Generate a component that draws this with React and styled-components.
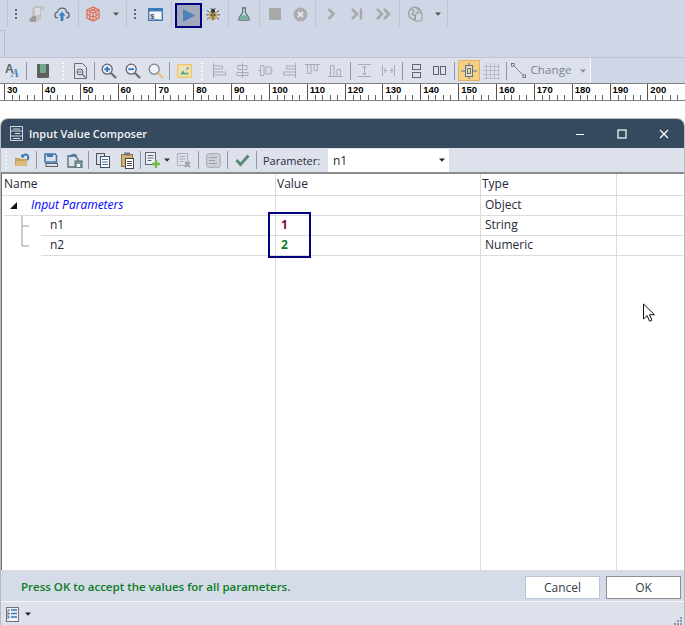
import React from 'react';
import styled, { createGlobalStyle } from 'styled-components';

const Global = createGlobalStyle`
  html, body { margin: 0; padding: 0; background: #fff; }
  body { font-family: "Open Sans", "Noto Sans", sans-serif; font-size: 12px; color: #1f2a3a; }
  #root { width: 685px; height: 625px; overflow: hidden; }
`;

const Page = styled.div`
  width: 685px; height: 625px; display: flex; flex-direction: column; background: #fff; position: relative;
`;
const TopArea = styled.div`
  background: #cfd6e5; height: 83px; display: flex; flex-direction: column; flex: none;
`;
const MainBar = styled.div`
  height: 28px; display: flex; align-items: center; padding-left: 7px; flex: none;
`;
const TabStrip = styled.div`
  height: 30px; flex: none; border-bottom: 1px solid #bcc4d5; box-sizing: border-box; padding-top: 2px;
`;
const TabEdge = styled.div`
  width: 5px; height: 27px; border-top: 1px solid #b4bccd; border-right: 1px solid #b4bccd; box-sizing: border-box;
`;
const SecondBar = styled.div`
  height: 25px; width: 591px; display: flex; align-items: center; background: #dce1ec;
  border-right: 1px solid #f4f6fa; box-sizing: border-box; flex: none;
`;
const Slot = styled.div`
  width: ${p => p.$w}px; height: 22px; flex: none; display: flex; align-items: center; justify-content: center;
`;
const Sep = styled.div`
  width: 1px; height: ${p => p.$h || 18}px; flex: none; background: ${p => p.$c || '#8f98a8'};
  margin-left: ${p => p.$l ?? 2}px; margin-right: ${p => p.$r ?? 2}px;
`;
const TallSep = styled(Sep)`
  height: 26px; background: #bdc5d3;
`;
const GripDots = styled.div`
  width: 2px; height: ${p => p.$h}px;
  background: repeating-linear-gradient(to bottom, ${p => p.$c} 0 2px, transparent 2px ${p => p.$s}px);
`;
const PlayButton = styled.div`
  width: 27px; height: 25px; margin-top: 3px; flex: none; box-sizing: border-box; border: 2px solid #000080;
  background: #a1a9bb; display: flex; align-items: center; justify-content: center;
`;
const ActiveTool = styled.div`
  width: 22px; height: 21px; flex: none; box-sizing: border-box; border: 1px solid #e2b35f; background: #f5cf84;
  display: flex; align-items: center; justify-content: center;
`;
const ChangeLabel = styled.span`
  width: 46px; flex: none; font-size: 11.5px; color: #7d8494; line-height: 1; letter-spacing: .1px; padding-bottom: 2px;
`;
const Ruler = styled.div`
  height: 18px; flex: none; display: flex; box-sizing: border-box; border-top: 1px solid #7f7f7f; border-bottom: 1px solid #7f7f7f;
  background: #fff; padding-left: 4px; overflow: hidden;
`;
const RulerCell = styled.div`
  width: 37.85px; flex: none; box-sizing: border-box; border-left: 1px solid #555; position: relative; height: 16px;
  background: repeating-linear-gradient(to right, transparent 0 6.57px, #666 6.57px 7.57px) 0 100% / 100% 5px no-repeat;
  font: bold 9.5px/12px "Liberation Sans", Arial, sans-serif; color: #000; padding-left: 2px;
`;
const Gap = styled.div` height: 18px; flex: none; `;
const Dialog = styled.div`
  width: 683px; height: 507px; margin-left: 1px; flex: none; display: flex; flex-direction: column; position: relative;
  box-sizing: border-box; border-radius: 7px 7px 0 0; background: #dce1ec; box-shadow: 0 0 0 1px #b9b9b9; overflow: hidden;
`;
const TitleBar = styled.div`
  height: 29px; flex: none; background: #354a5f; display: flex; align-items: center; color: #fff; padding-left: 9px;
`;
const TitleText = styled.div`
  font-size: 11px; font-weight: 600; margin-left: 6px; flex: 1; color: #f2f4f7; padding-bottom: 1px;
`;
const WinButtons = styled.div`
  display: flex; margin-right: -1px; flex: none;
`;
const WinButton = styled.div`
  width: 42px; height: 29px; display: flex; align-items: center; justify-content: center; flex: none;
`;
const DialogTools = styled.div`
  height: 24px; flex: none; display: flex; align-items: center; background: #dce1ec;
`;
const ParamLabel = styled.span`
  font-size: 11px; color: #2a2a3a; width: 71px; flex: none; padding-left: 6px; box-sizing: border-box;
`;
const Combo = styled.div`
  width: 121px; height: 23px; flex: none; background: #fff; display: flex; align-items: center; justify-content: space-between;
  padding: 0 4px 0 5px; box-sizing: border-box; font-size: 12px; color: #1f2a3a;
`;
const GridArea = styled.div`
  height: 398px; flex: none; display: flex; background: #fff; border-top: 2px solid #8b8b8b; border-left: 1px solid #6f6f6f;
  box-sizing: border-box; position: relative;
`;
const Column = styled.div`
  width: ${p => p.$w}px; flex: ${p => (p.$w ? 'none' : 1)}; border-right: 1px solid ${p => (p.$last ? 'transparent' : '#dcdcdc')}; box-sizing: border-box;
`;
const HeadCell = styled.div`
  height: 22px; box-sizing: border-box; border-bottom: 1px solid #dcdcdc; padding: 0 0 0 ${p => p.$pad ?? 1}px; font-size: 12px; line-height: 20px; color: #22283a;
`;
const Cell = styled.div`
  height: 20px; box-sizing: border-box; border-bottom: 1px solid #dcdcdc; padding: 0 0 1px ${p => p.$pad ?? 5}px; font-size: 12px; line-height: 18px; color: #1f2a3a;
  margin-left: ${p => p.$ml ?? 0}px; display: flex; align-items: center; flex: ${p => (p.$grow ? 1 : 'none')};
`;
const GroupName = styled.span`
  color: #0000ff; font-style: italic;
`;
const Expander = styled.span`
  width: 0; height: 0; border-style: solid; border-width: 0 0 7px 7px; border-color: transparent transparent #111 transparent; margin: 0 14px 0 6px;
`;
const NumValue = styled.span`
  font-weight: 700; color: ${p => p.$c};
`;
const TreeRow = styled.div`
  display: flex; height: 20px;
`;
const TreeGuide = styled.div`
  width: 39px; flex: none;
`;
const Highlight = styled.div`
  position: absolute; left: 266px; top: 38px; width: 43px; height: 46px; box-sizing: border-box; border: 2px solid #000080; pointer-events: none;
`;
const StatusArea = styled.div`
  height: 32px; flex: none; background: #d5dbe8; display: flex; align-items: center; justify-content: space-between;
  border-bottom: 1px solid #f6f7fa; border-top: 1px solid #d9dce2; box-sizing: border-box; padding: 0 3px 0 20px;
`;
const StatusText = styled.span`
  font-size: 11.5px; font-weight: 600; color: #0b7d22;
`;
const Buttons = styled.div`
  display: flex; gap: 6px; align-self: flex-end; margin-bottom: 2px;
`;
const Btn = styled.button`
  width: 75px; height: 23px; box-sizing: border-box; background: #fff; font: 12px "Open Sans", sans-serif; color: #333b48; padding: 0;
  border: ${p => (p.$primary ? '1px solid #8e8e8e' : '1px solid #bcc6d3')};
`;
const BottomBar = styled.div`
  flex: 1; display: flex; align-items: center; padding-left: 3px; justify-content: flex-start; position: relative;
`;
const ResizeGrip = styled.div`
  position: absolute; right: 1px; bottom: 2px; width: 10px; height: 10px;
`;
const Cursor = styled.svg`
  position: absolute; left: 642px; top: 303px;
`;

const I = ({ s = 16, w, r, children }) => {
  const vw = w || s;
  return (
    <svg width={r || vw} height={r ? (r * s) / vw : s} viewBox={`0 0 ${vw} ${s}`} fill="none">
      {children}
    </svg>
  );
};
const Down = ({ c = '#555' }) => <I s={4} w={6}><path d="M0 .5h6L3 3.8z" fill={c} /></I>;

const Deploy = () => <I s={18}><path d="M6 1h7c2 0 3 1 3 2.5V5h-3v9l-5 3H3c-2 0-2.5-1.5-2-2.5L4 12V4z" fill="#c2c2c2" /><path d="M1 14.5L5 11h3v6H3z" fill="#9c9c9c" /><path d="M7 3h5v7H7z" fill="#d9dbe0" /></I>;
const Cloud = () => <I s={18} r={16}><path d="M4.5 13.5C2 13.5 1 11.8 1 10.2 1 8.4 2.3 7.4 3.6 7.3 4 4.8 6.4 2.5 9.2 2.5c2.7 0 4.6 1.9 5 4.3 1.6.2 2.8 1.6 2.8 3.3 0 1.9-1.3 3.4-3.4 3.4" stroke="#5c6470" strokeWidth="1.4" /><path d="M9 6.5l4 4.2h-2.4V17H7.4v-6.3H5z" fill="#3b7ec0" /></I>;
const CubeIcon = () => <I s={16}><g stroke="#e46f52" strokeWidth="1.3"><path d="M2 4l6-3 6 3v8l-6 3-6-3z" /><path d="M2 4l6 3 6-3M8 7v8M5 2.5l6 3v8M11 2.5l-6 3v8M2 8l6 3 6-3" /></g></I>;
const ConsoleIcon = () => <I s={13} w={15}><rect x=".7" y=".7" width="13.6" height="11.6" stroke="#3c79b5" strokeWidth="1.4" fill="#f4f6fa" /><rect x="1" y="1" width="13" height="2.4" fill="#3c79b5" /><text x="2" y="10.5" fontSize="7.5" fontWeight="700" fill="#3c4a60" fontFamily="Liberation Mono, monospace">$_</text></I>;
const Play = () => <I s={13} w={12}><path d="M0 0l12 6.5L0 13z" fill="#4b82bc" /></I>;
const Bug = () => <I s={16} r={14}><g stroke="#444" strokeWidth="1"><path d="M1 4l3 2M15 4l-3 2M0 9h3M16 9h-3M1 14l3-2M15 14l-3-2M5 1l2 2M11 1L9 3" /></g><ellipse cx="8" cy="9.5" rx="4.7" ry="5.5" fill="#c9a95c" /><path d="M8 4v11" stroke="#444" /><circle cx="8" cy="4.5" r="2.4" fill="#3b3b3b" /><circle cx="6" cy="9" r="1" fill="#444" /><circle cx="10" cy="9" r="1" fill="#444" /></I>;
const Flask = () => <I s={16} r={14}><path d="M5.5 1h5M6.5 1v5L2 13.2c-.5 1 0 1.8 1 1.8h10c1 0 1.5-.8 1-1.8L9.5 6V1" stroke="#5f6d72" strokeWidth="1.3" /><path d="M5 9.5h6l2 4.2H3z" fill="#69b5a0" /></I>;
const Stop = () => <I s={12}><rect width="12" height="12" fill="#a9a9a9" /></I>;
const XCircle = () => <I s={15}><circle cx="7.5" cy="7.5" r="7" fill="#adadad" /><path d="M5 5l5 5M10 5l-5 5" stroke="#e6e8ee" strokeWidth="2" /></I>;
const Chev = () => <I s={12} w={9}><path d="M1.5 1l5 5-5 5" stroke="#a8a8a8" strokeWidth="2.6" /></I>;
const ChevBar = () => <I s={12}><path d="M1 1l5 5-5 5" stroke="#a8a8a8" strokeWidth="2.6" /><path d="M10 .5v11" stroke="#a8a8a8" strokeWidth="2.4" /></I>;
const ChevDouble = () => <I s={12} w={15}><path d="M1 1l5 5-5 5M8 1l5 5-5 5" stroke="#a8a8a8" strokeWidth="2.6" /></I>;
const Globe = () => <I s={16}><circle cx="7" cy="7.5" r="6.3" stroke="#a3a3a3" strokeWidth="1.5" /><path d="M3 3l3 2-2 3 3 2v3M8 2l3 2-2 2" stroke="#a3a3a3" strokeWidth="1.5" /><path d="M8 7h6v6l-1 2H7z" fill="#cfd6e5" stroke="#9a9a9a" /></I>;

const AaIcon = () => <I s={19} w={24}><text x="5" y="12" fontSize="12" fontWeight="700" fill="#5c6470" fontFamily="Liberation Sans, sans-serif">A</text><text x="11" y="16" fontSize="12" fontWeight="700" fontStyle="italic" fill="#4a82bf" fontFamily="Liberation Serif, serif">A</text></I>;
const BookIcon = () => <I s={14} w={12}><rect width="12" height="14" rx="1" fill="#5e5e5e" /><rect x="3" y="0" width="6" height="9" fill="#6fa88c" /></I>;
const DocZoom = () => <I s={16} w={13}><path d="M.5 .5h8l4 4v11H.5z" stroke="#6a7078" strokeWidth="1" /><circle cx="6" cy="9" r="3" stroke="#555" /><path d="M4.5 9h3" stroke="#555" /><path d="M8.5 11.5l3 3" stroke="#6a7078" strokeWidth="1.4" /></I>;
const Zoom = ({ sign, handle = '#6a6a6a', ring = '#5b6470' }) => <I s={16}><circle cx="6.2" cy="6.2" r="5" stroke={ring} strokeWidth="1.3" fill="#eef1f6" />{sign && <path d={sign === '+' ? 'M3.4 6.2h5.6M6.2 3.4v5.6' : 'M3.4 6.2h5.6'} stroke="#3777b8" strokeWidth="1.9" />}<path d="M10 10l5 5" stroke={handle} strokeWidth="2.2" /></I>;
const Picture = () => <I s={14} w={15}><rect x=".7" y=".7" width="13.6" height="12.6" stroke="#efc76f" strokeWidth="1.4" fill="#f0e3b3" /><path d="M3 10.5l3-4 2.5 3 1.5-1.5 2 2.5z" fill="#5ea587" /><circle cx="10.5" cy="4.5" r="1.2" fill="#6f9fd0" /></I>;
const G = '#a6adb9';
const AlignIcon = ({ d }) => <I s={15}><path d={d} stroke={G} strokeWidth="1" /></I>;
const StackIcon = () => <I s={14} w={9}><rect x=".5" y=".5" width="8" height="5" stroke="#5f6670" /><rect x=".5" y="8.5" width="8" height="5" stroke="#5f6670" /></I>;
const PairIcon = () => <I s={9} w={13}><rect x=".5" y=".5" width="5" height="8" stroke="#5f6670" /><rect x="7.5" y=".5" width="5" height="8" stroke="#5f6670" /></I>;
const Snap = () => <I s={16}><rect x="4.5" y="2.5" width="7" height="11" stroke="#6a7078" fill="#e8dcc0" /><rect x="6.5" y="5.5" width="3" height="5" stroke="#6a7078" /><path d="M0 8h4.5M11.5 8H16M8 0v2.5M8 13.5V16" stroke="#4d7aa8" /></I>;
const GridIco = () => <I s={16} w={17}><path d="M0 3.5h17M0 7.5h17M0 11.5h17M0 15.5h17M3.5 0v16M7.5 0v16M11.5 0v16M15.5 0v16" stroke="#b6bcc8" /></I>;
const LineIco = () => <I s={15}><path d="M2 2l11 11" stroke="#6b7280" strokeWidth=".8" /><rect x=".5" y=".5" width="2.5" height="2.5" stroke="#6b7280" fill="#fff" /><rect x="12" y="12" width="2.5" height="2.5" stroke="#6b7280" fill="#fff" /></I>;

const AppWinIcon = () => <I s={15} w={13}><path d="M.5 .5h12v14H.5zM.5 5h12M.5 10h12M3 3h7M5 7.5h5M3 12.5h7" stroke="#d4dae2" /></I>;
const MinIcon = () => <I s={10}><path d="M1 5.5h8" stroke="#fff" strokeWidth="1.2" /></I>;
const MaxIcon = () => <I s={10}><rect x="1" y="1" width="8" height="8" stroke="#fff" strokeWidth="1.2" /></I>;
const CloseIcon = () => <I s={10}><path d="M1 1l8 8M9 1L1 9" stroke="#fff" strokeWidth="1.2" /></I>;

const Open = () => <I s={14} w={16}><path d="M1 5h5l1 1h6v7H1z" fill="#c9a35e" /><path d="M1 13l2-5h11l-2 5z" fill="#dcbb7b" /><path d="M8 4c1-3 5-3.5 6-1 .6 1.5 0 3-.5 4" stroke="#3d78b5" strokeWidth="2" /><path d="M6.5 1.5l2 4 2.5-3z" fill="#3d78b5" /></I>;
const Save = () => <I s={14}><path d="M1 1h10l1.5 1.5V9H1z" stroke="#3f78b2" strokeWidth="1.6" /><rect x="3" y="1" width="6" height="3" fill="#3f78b2" /><rect x="2" y="10.5" width="11.5" height="3" stroke="#5e5e5e" /></I>;
const SaveAll = () => <I s={15} w={16}><path d="M1 3h7l3 3v8H1z" stroke="#5e6670" strokeWidth="1.3" /><path d="M3 4c2-3 5-3 7-1" stroke="#3f78b2" strokeWidth="1.6" /><rect x="8" y="8" width="7" height="7" fill="#6f9f92" stroke="#5e6670" /><rect x="10" y="11" width="3" height="3" fill="#fff" /></I>;
const CopyIcon = () => <I s={15} w={14}><rect x=".5" y=".5" width="8" height="11" stroke="#4d5560" fill="#dce1ec" /><rect x="4.5" y="3.5" width="9" height="11" stroke="#44505e" fill="#fff" /><path d="M6 6.5h6M6 9h6M6 11.5h6" stroke="#3f78b2" /></I>;
const PasteIcon = () => <I s={17} w={13}><rect x=".5" y="2.5" width="11" height="12" fill="#d5b36e" stroke="#8a7447" /><rect x="3" y=".5" width="6" height="3" fill="#777" /><rect x="4.5" y="6.5" width="8" height="10" fill="#fff" stroke="#444" /><path d="M6 9.5h5M6 11.5h5M6 13.5h5" stroke="#555" /></I>;
const AddRow = () => <I s={16}><rect x=".5" y=".5" width="10" height="12" stroke="#5a6470" fill="#eef1f6" /><path d="M2.5 3.5h6M2.5 6h6M2.5 8.5h4" stroke="#5a6470" /><path d="M11 8v8M7 12h8" stroke="#75b843" strokeWidth="2.4" /></I>;
const DelRow = () => <I s={15}><rect x=".5" y=".5" width="10" height="12" stroke="#a9afb9" /><path d="M2.5 3.5h6M2.5 6h6M2.5 8.5h4" stroke="#a9afb9" /><path d="M8 9l5 5M13 9l-5 5" stroke="#a0a0a0" strokeWidth="1.8" /></I>;
const DocBtn = () => <I s={15}><rect x=".7" y=".7" width="13.6" height="13.6" rx="2" stroke="#a8a8a8" fill="#cdd1d9" /><path d="M3 4.5h8M3 7.5h6M3 10.5h8" stroke="#9b9ea5" /></I>;
const Check = () => <I s={14} w={15}><path d="M1.5 7l4 4.5 8-9" stroke="#5c8a78" strokeWidth="3" /></I>;
const TreeListIcon = () => <I s={15} w={13}><rect x=".5" y=".5" width="12" height="14" stroke="#6c7480" fill="#eef1f6" /><path d="M2 3h2M2 3v9M2 6.5h2M2 10h2" stroke="#6c7480" /><path d="M5 3h6M5 6.5h6M5 10h6" stroke="#3f78b2" strokeWidth="1.5" /></I>;

const rulerLabels = [30, 40, 50, 60, 70, 80, 90, 100, 110, 120, 130, 140, 150, 160, 170, 180, 190, 200];

const ALIGN = [
  'M1.5 0v15M1.5 3h9v3h-9M1.5 9h12v3h-12',
  'M7.5 0v15M3 2.5h9v4H3zM2 9.5h11v3H2z',
  'M0 7.5h2M5.5 7.5h1M13 7.5h2M2.5 2.5h3.5v10H2.5zM8 4h5v7H8z',
  'M13.5 0v15M13.5 3h-9v3h9M13.5 9h-12v3h12',
  'M0 1.5h15M2.5 1.5v9h3.5v-9M9 1.5v6h3.5v-6',
  'M0 13.5h15M2.5 13.5v-11h3.5v11M9 13.5v-7h3.5v7',
];

export default function App() {
  return (
    <Page>
      <Global />
      <TopArea>
        <MainBar>
          <TallSep $l={0} $r={0} />
          <Slot $w={16}><GripDots $h={10} $c="#666" $s={4} /></Slot>
          <Slot $w={26}><Deploy /></Slot>
          <Slot $w={24}><Cloud /></Slot>
          <TallSep $l={4} $r={0} />
          <Slot $w={28}><CubeIcon /></Slot>
          <Slot $w={18}><Down /></Slot>
          <TallSep $l={1} $r={0} />
          <Slot $w={16}><GripDots $h={10} $c="#666" $s={4} /></Slot>
          <Slot $w={24}><ConsoleIcon /></Slot>
          <TallSep $l={4} $r={3} />
          <PlayButton><Play /></PlayButton>
          <Slot $w={22}><Bug /></Slot>
          <TallSep $l={4} $r={0} />
          <Slot $w={30}><Flask /></Slot>
          <TallSep $l={0} $r={0} />
          <Slot $w={30}><Stop /></Slot>
          <Slot $w={20}><XCircle /></Slot>
          <TallSep $l={5} $r={0} />
          <Slot $w={30}><Chev /></Slot>
          <Slot $w={22}><ChevBar /></Slot>
          <Slot $w={30}><ChevDouble /></Slot>
          <TallSep $l={1} $r={0} />
          <Slot $w={31}><Globe /></Slot>
          <Slot $w={13}><Down /></Slot>
          <TallSep $l={3} $r={0} />
        </MainBar>
        <TabStrip><TabEdge /></TabStrip>
        <SecondBar>
          <Slot $w={24}><AaIcon /></Slot>
          <Sep />
          <Slot $w={28}><BookIcon /></Slot>
          <Slot $w={11}><GripDots $h={18} $c="#f5f6f9" $s={4} /></Slot>
          <Slot $w={24}><DocZoom /></Slot>
          <Sep />
          <Slot $w={24}><Zoom sign="+" /></Slot>
          <Slot $w={23}><Zoom sign="-" /></Slot>
          <Slot $w={23}><Zoom handle="#e8c36e" ring="#7a8492" /></Slot>
          <Sep />
          <Slot $w={24}><Picture /></Slot>
          <Slot $w={12}><GripDots $h={18} $c="#f5f6f9" $s={4} /></Slot>
          {ALIGN.map(d => <Slot key={d} $w={23.2}><AlignIcon d={d} /></Slot>)}
          <Sep $l={2.4} />
          <Slot $w={24}><AlignIcon d="M1 1.5h13M1 13.5h13M7.5 3v9M5.5 5l2-2 2 2M5.5 10l2 2 2-2" /></Slot>
          <Slot $w={23}><AlignIcon d="M1.5 2v11M13.5 2v11M3 7.5h3M9 7.5h3M4 5v5M11 5v5" /></Slot>
          <Sep />
          <Slot $w={24}><StackIcon /></Slot>
          <Slot $w={22}><PairIcon /></Slot>
          <Sep $l={3} $r={3} />
          <ActiveTool><Snap /></ActiveTool>
          <Slot $w={24}><GridIco /></Slot>
          <Sep $r={0} />
          <Slot $w={24}><LineIco /></Slot>
          <ChangeLabel>Change</ChangeLabel>
          <Slot $w={12}><Down c="#8a90a0" /></Slot>
        </SecondBar>
      </TopArea>
      <Ruler>
        {rulerLabels.map(n => <RulerCell key={n}>{n}</RulerCell>)}
      </Ruler>
      <Gap />
      <Dialog>
        <TitleBar>
          <AppWinIcon />
          <TitleText>Input Value Composer</TitleText>
          <WinButtons>
            <WinButton><MinIcon /></WinButton>
            <WinButton><MaxIcon /></WinButton>
            <WinButton><CloseIcon /></WinButton>
          </WinButtons>
        </TitleBar>
        <DialogTools>
          <Slot $w={9}><GripDots $h={18} $c="#f5f6f9" $s={4} /></Slot>
          <Slot $w={24}><Open /></Slot>
          <Sep $l={2} $r={2} />
          <Slot $w={24}><Save /></Slot>
          <Slot $w={24}><SaveAll /></Slot>
          <Sep $l={1} $r={2} />
          <Slot $w={24}><CopyIcon /></Slot>
          <Slot $w={24}><PasteIcon /></Slot>
          <Sep $l={1} $r={2} />
          <Slot $w={20}><AddRow /></Slot>
          <Slot $w={8}><Down c="#333" /></Slot>
          <Slot $w={26}><DelRow /></Slot>
          <Sep $l={1} $r={2} />
          <Slot $w={24}><DocBtn /></Slot>
          <Sep $l={2} $r={2} />
          <Slot $w={24}><Check /></Slot>
          <Sep $l={2} $r={0} />
          <ParamLabel>Parameter:</ParamLabel>
          <Combo>n1 <Down c="#222" /></Combo>
        </DialogTools>
        <GridArea>
          <Column $w={274}>
            <HeadCell $pad={2}>Name</HeadCell>
            <Cell $pad={0} $ml={2}><Expander /><GroupName>Input Parameters</GroupName></Cell>
            <TreeRow>
              <TreeGuide><svg width="37" height="20"><path d="M20 0v20M20 10h7" stroke="#999" fill="none" /></svg></TreeGuide>
              <Cell $pad={9} $grow>n1</Cell>
            </TreeRow>
            <TreeRow>
              <TreeGuide><svg width="37" height="20"><path d="M20 0v10h7" stroke="#999" fill="none" /></svg></TreeGuide>
              <Cell $pad={9} $grow>n2</Cell>
            </TreeRow>
          </Column>
          <Column $w={205}>
            <HeadCell>Value</HeadCell>
            <Cell />
            <Cell><NumValue $c="#7b0a46">1</NumValue></Cell>
            <Cell><NumValue $c="#0a7f1d">2</NumValue></Cell>
          </Column>
          <Column $w={136}>
            <HeadCell>Type</HeadCell>
            <Cell $pad={4}>Object</Cell>
            <Cell $pad={4}>String</Cell>
            <Cell $pad={4}>Numeric</Cell>
          </Column>
          <Column $last>
            <HeadCell />
            <Cell />
            <Cell />
            <Cell />
          </Column>
          <Highlight />
        </GridArea>
        <StatusArea>
          <StatusText>Press OK to accept the values for all parameters.</StatusText>
          <Buttons>
            <Btn>Cancel</Btn>
            <Btn $primary>OK</Btn>
          </Buttons>
        </StatusArea>
        <BottomBar>
          <Slot $w={16}><TreeListIcon /></Slot>
          <Slot $w={16}><Down c="#222" /></Slot>
          <ResizeGrip>
            <svg width="10" height="10"><g fill="#8e95a3"><rect x="7" y="0" width="2" height="2" /><rect x="4" y="3" width="2" height="2" /><rect x="7" y="3" width="2" height="2" /><rect x="1" y="6" width="2" height="2" /><rect x="4" y="6" width="2" height="2" /><rect x="7" y="6" width="2" height="2" /></g></svg>
          </ResizeGrip>
        </BottomBar>
      </Dialog>
      <Cursor width="14" height="20" viewBox="0 0 14 20"><path d="M1.5 1v15l3.6-3.4 2.4 5.6 2.4-1-2.4-5.5h5z" fill="#fff" stroke="#111" strokeWidth="1" /></Cursor>
    </Page>
  );
}
